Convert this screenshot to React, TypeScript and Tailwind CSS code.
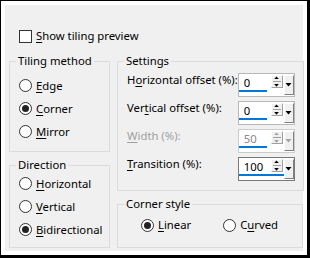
import React from "react";

function U({ children }: { children: React.ReactNode }) {
  return <span className="underline decoration-1 underline-offset-[2px]">{children}</span>;
}

function Radio({ checked, children }: { checked?: boolean; children: React.ReactNode }) {
  return (
    <div className="flex items-center h-[23px]">
      <span className="w-[13px] h-[13px] rounded-full border border-[#333333] bg-white flex items-center justify-center shrink-0">
        {checked && <span className="w-[7px] h-[7px] rounded-full bg-[#222222]" />}
      </span>
      <span className="ml-[4px] whitespace-nowrap">{children}</span>
    </div>
  );
}

function Tri({ up, color }: { up?: boolean; color: string }) {
  return (
    <svg width="7" height="4" viewBox="0 0 7 4" className="block">
      {up ? <polygon points="0.5,4 6.5,4 3.5,0.5" fill={color} /> : <polygon points="0.5,0 6.5,0 3.5,3.5" fill={color} />}
    </svg>
  );
}

function SpinBox({ value, disabled, focused }: { value: string; disabled?: boolean; focused?: boolean }) {
  const arrow = disabled ? "#a0a0a0" : "#000000";
  return (
    <div
      className={`relative w-[57px] h-[24px] bg-white border ${
        focused ? "border-[#7a7a7a]" : disabled ? "border-[#cccccc]" : "border-[#b8b8b8]"
      }`}
    >
      <div className={`absolute left-[5px] top-[1px] leading-4 ${disabled ? "text-[#8a8a8a]" : "text-black"}`}>{value}</div>
      <div className={`absolute left-0 top-[16px] h-[2px] ${focused ? "w-[55px]" : "w-[28px]"} bg-[#0078d7]`} />
      <div className="absolute left-[32px] top-[1px] w-[12px] h-[13px] bg-[#f0f0f0] border-t border-l border-t-white border-l-white border-b border-r border-b-[#a0a0a0] border-r-[#a0a0a0] flex flex-col items-center justify-center gap-[2px]">
        <Tri up color={arrow} />
        <div className="w-[8px] h-px bg-[#a0a0a0]" />
        <Tri color={arrow} />
      </div>
      <div className="absolute left-[45px] top-[1px] w-[10px] h-[20px] bg-[#f0f0f0] border-t border-l border-t-white border-l-white border-b border-r border-b-[#808080] border-r-[#808080] flex items-center justify-center">
        <Tri color={arrow} />
      </div>
    </div>
  );
}

function Row({ label, value, disabled, focused }: { label: React.ReactNode; value: string; disabled?: boolean; focused?: boolean }) {
  return (
    <div className="flex justify-between h-[24px]">
      <div className={`mt-[-1px] leading-4 whitespace-nowrap ${disabled ? "text-[#a0a0a0]" : "text-black"}`}>{label}</div>
      <SpinBox value={value} disabled={disabled} focused={focused} />
    </div>
  );
}

export default function App() {
  return (
    <div className="w-[310px] h-[258px] bg-black pt-px pl-px pr-[3px] pb-[3px] font-['Noto_Sans',sans-serif] text-[11.3px] leading-4 text-black">
      <div className="w-full h-full bg-white p-[4px]">
        <div className="w-full h-full bg-[#f0f0f0] pt-[23px] pl-[4px]">
          <div className="flex items-center h-4 ml-[10px]">
            <span className="w-[13px] h-[13px] border border-[#333333] bg-white shrink-0" />
            <span className="ml-[4px]">
              <U>S</U>how tiling preview
            </span>
          </div>
          <div className="flex mt-[10px] gap-[7px]">
            <div className="w-[101px] flex flex-col gap-[6px]">
              <fieldset className="h-[98px] border border-[#dcdcdc] m-0 p-0 pl-[9px] pt-[6px]">
                <legend className="ml-[-3px] px-[2px] leading-[14px]">Tiling method</legend>
                <Radio>
                  <U>E</U>dge
                </Radio>
                <Radio checked>
                  <U>C</U>orner
                </Radio>
                <Radio>
                  <U>M</U>irror
                </Radio>
              </fieldset>
              <fieldset className="h-[90px] border border-[#dcdcdc] m-0 p-0 pl-[9px]">
                <legend className="ml-[-3px] px-[2px] leading-[14px]">Direction</legend>
                <Radio>
                  <U>H</U>orizontal
                </Radio>
                <Radio>
                  <U>V</U>ertical
                </Radio>
                <Radio checked>
                  <U>B</U>idirectional
                </Radio>
              </fieldset>
            </div>
            <div className="w-[186px] flex flex-col gap-[6px]">
              <fieldset className="h-[137px] border border-[#dcdcdc] m-0 p-0 pl-[9px] pr-[8px] pt-[5px]">
                <legend className="ml-[-3px] px-[2px] leading-[14px]">Settings</legend>
                <div className="flex flex-col gap-[4px]">
                  <Row
                    label={
                      <>
                        H<U>o</U>rizontal offset (%):
                      </>
                    }
                    value="0"
                  />
                  <Row
                    label={
                      <>
                        Ver<U>t</U>ical offset (%):
                      </>
                    }
                    value="0"
                  />
                  <Row
                    label={
                      <>
                        <U>W</U>idth (%):
                      </>
                    }
                    value="50"
                    disabled
                  />
                  <Row
                    label={
                      <>
                        <U>T</U>ransition (%):
                      </>
                    }
                    value="100"
                    focused
                  />
                </div>
              </fieldset>
              <fieldset className="h-[51px] border border-[#dcdcdc] m-0 p-0 pl-[23px] pt-[6px]">
                <legend className="ml-[-17px] px-[2px] leading-[14px]">Corner style</legend>
                <div className="flex h-4 items-center">
                  <div className="flex items-center">
                    <span className="w-[13px] h-[13px] rounded-full border border-[#333333] bg-white flex items-center justify-center shrink-0">
                      <span className="w-[7px] h-[7px] rounded-full bg-[#222222]" />
                    </span>
                    <span className="ml-[4px]">
                      <U>L</U>inear
                    </span>
                  </div>
                  <div className="flex items-center ml-[32px]">
                    <span className="w-[13px] h-[13px] rounded-full border border-[#333333] bg-white shrink-0" />
                    <span className="ml-[4px]">
                      C<U>u</U>rved
                    </span>
                  </div>
                </div>
              </fieldset>
            </div>
          </div>
        </div>
      </div>
    </div>
  );
}
